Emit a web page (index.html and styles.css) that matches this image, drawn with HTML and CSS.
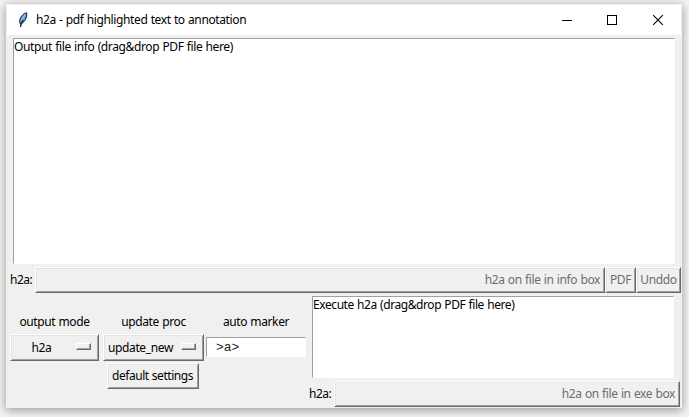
FILE: index.html
```html
<!DOCTYPE html>
<html lang="en">
<head>
<meta charset="utf-8">
<title>h2a - pdf highlighted text to annotation</title>
<link rel="stylesheet" href="styles.css">
</head>
<body>
<div class="window">
  <header class="titlebar">
    <svg class="feather" width="12" height="18" viewBox="0 0 12 18">
      <path d="M8.500 1.700C5.500 2.500 2.500 5.500 1.800 8.800c-.4 2-.1 3.200.8 4.400C5 12 7.500 9.500 8.300 6.700c.5-2 .7-3.500.2-5z" fill="#5b91cf" stroke="#14202e" stroke-width="1"/>
      <path d="M7.300 3.500C5.500 5.500 4 8 3.200 11" fill="none" stroke="#8fbdf0" stroke-width="1.600"/>
      <path d="M5 9C4 11 3 13 2.500 16" fill="none" stroke="#111" stroke-width="1.200"/>
    </svg>
    <h1 class="title">h2a - pdf highlighted text to annotation</h1>
    <svg class="controls" width="104" height="12" viewBox="0 0 104 12">
      <path d="M0 6.500h10M45.500 1.500h9v9h-9z" fill="none" stroke="#000" shape-rendering="crispEdges"/>
      <path d="M91.200 1.200l9.600 9.600M100.800 1.200l-9.600 9.600" fill="none" stroke="#000" stroke-width="1.100"/>
    </svg>
  </header>
  <main class="content">
    <div class="textbox info">Output file info (drag&amp;drop PDF file here)</div>
    <div class="run-row">
      <span class="run-label">h2a:</span>
      <button class="button grow" disabled>h2a on file in info box</button>
      <button class="button pdf" disabled>PDF</button>
      <button class="button undo" disabled>Unddo</button>
    </div>
    <div class="lower">
      <div class="settings">
        <div class="column mode">
          <label>output mode</label>
          <button class="button menu">h2a<i class="indicator"></i></button>
        </div>
        <div class="column proc">
          <label>update proc</label>
          <button class="button menu">update_new<i class="indicator"></i></button>
          <button class="button defaults">default settings</button>
        </div>
        <div class="column marker">
          <label>auto marker</label>
          <div class="entry">&gt;a&gt;</div>
        </div>
      </div>
      <div class="execute">
        <div class="textbox exe">Execute h2a (drag&amp;drop PDF file here)</div>
        <div class="run-row">
          <span class="run-label">h2a:</span>
          <button class="button grow" disabled>h2a on file in exe box</button>
        </div>
      </div>
    </div>
  </main>
</div>
</body>
</html>
```
FILE: styles.css
```css
* { box-sizing: border-box; }
body {
  margin: 0;
  width: 689px;
  height: 417px;
  padding: 4px 7px 9px 6px;
  overflow: hidden;
  background: #f5f5f5;
  font: 12px/16px "Noto Sans", "Open Sans", sans-serif;
  letter-spacing: -0.38px;
  word-spacing: 0.5px;
  color: #000;
}
.window {
  width: 676px;
  height: 404px;
  background: #f0f0f0;
  border: 1px solid #f0f0f0;
  box-shadow: 0 2px 9px 1px rgba(0, 0, 0, .34);
}
.titlebar {
  display: flex;
  align-items: center;
  height: 30px;
  padding-left: 11px;
  background: #fff;
}
.title {
  margin: 0 auto 0 6px;
  font-size: 12px;
  font-weight: 400;
  white-space: nowrap;
}
.controls { margin: 0 15px 0 0; }
.content { display: flex; flex-direction: column; }
.textbox {
  border: 1px solid #fff;
  border-top-color: #a0a0a0;
  border-left-color: #a0a0a0;
  background: #fff;
  white-space: nowrap;
}
.info { width: 662px; height: 226px; margin: 3px 0 0 6px; }
.run-row { display: flex; align-items: center; height: 26px; margin-top: 3px; padding-left: 3px; }
.run-label { width: 25px; white-space: nowrap; letter-spacing: -0.5px; }
.button {
  display: flex;
  align-items: center;
  justify-content: center;
  height: 26px;
  margin: 0;
  padding: 0;
  border: 1px solid;
  border-color: #fff #696969 #696969 #fff;
  box-shadow: inset 1px 1px #e3e3e3, inset -1px -1px #a0a0a0;
  background: #f0f0f0;
  color: #000;
  font: inherit;
  letter-spacing: inherit;
  word-spacing: inherit;
  white-space: nowrap;
}
.button:disabled { color: #6d6d6d; }
.grow { flex: 1; justify-content: flex-end; padding-right: 4px; }
.pdf { width: 31px; }
.undo { width: 45px; }
.lower { display: flex; }
.settings { display: flex; gap: 4px; padding: 21px 0 0 3px; width: 301px; }
.column { display: flex; flex-direction: column; align-items: center; }
.mode { width: 89px; }
.proc { width: 101px; }
.marker { width: 100px; margin-left: -2px; }
.menu { position: relative; width: 100%; height: 27px; margin-top: 4px; padding-right: 26px; }
.indicator {
  position: absolute;
  right: 7px;
  top: 8px;
  width: 15px;
  height: 7px;
  border: 1px solid;
  border-color: #fff #696969 #696969 #fff;
  box-shadow: inset -1px -1px #a0a0a0;
}
.defaults { width: 92px; margin: 2px 0 0 -2px; letter-spacing: -0.45px; }
.entry {
  width: 100px;
  height: 20px;
  margin-top: 7px;
  padding-left: 9px;
  border: 1px solid #fff;
  border-top-color: #a0a0a0;
  border-left-color: #a0a0a0;
  background: #fff;
  color: #222;
  font: 13px/20px "Liberation Mono", monospace;
  letter-spacing: 0;
}
.execute { width: 372px; }
.exe { width: 362px; height: 82px; margin: 3px 0 0 4px; letter-spacing: -0.42px; }
.execute .run-row { padding-left: 1px; }
```
